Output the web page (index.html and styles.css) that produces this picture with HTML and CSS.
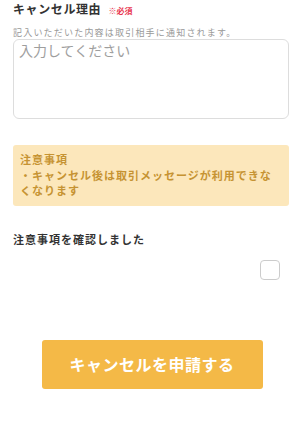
FILE: index.html
```html
<!DOCTYPE html>
<html lang="ja">
<head>
  <meta charset="UTF-8" />
  <meta name="viewport" content="width=device-width, initial-scale=1.0" />
  <title>キャンセル申請</title>
  <link rel="stylesheet" href="styles.css">
</head>
<body>
  <form class="cancel-form">
    <div class="field">
      <label class="field-label" for="reason">キャンセル理由 <span class="required">※必須</span></label>
      <p class="field-note">記入いただいた内容は取引相手に通知されます。</p>
      <textarea id="reason" class="textarea" placeholder="入力してください"></textarea>
    </div>

    <div class="notice">
      <p>注意事項</p>
      <p>・キャンセル後は取引メッセージが利用できなくなります</p>
    </div>

    <div class="confirm">
      <p class="confirm-label">注意事項を確認しました</p>
      <div class="confirm-row">
        <input type="checkbox" class="checkbox" id="agree" />
      </div>
    </div>

    <div class="actions">
      <button type="button" class="button">キャンセルを申請する</button>
    </div>
  </form>
</body>
</html>
```

FILE: styles.css
```css
body {
  margin: 0;
  font-family: "Noto Sans CJK JP", "Noto Sans", sans-serif;
  color: #333;
  background: #fff;
}
p { margin: 0; }
.cancel-form {
  padding: 1px 15px 0 13px;
}
.field-label {
  display: block;
  margin-top: 0;
  font-size: 12px;
  font-weight: bold;
  letter-spacing: 0.6px;
  line-height: 16px;
}
.required {
  margin-left: 4px;
  font-size: 8px;
  color: #e8344e;
  letter-spacing: 0;
}
.field-note {
  margin-top: 7px;
  font-size: 9px;
  color: #999;
  letter-spacing: 1.2px;
  line-height: 13px;
}
.textarea {
  display: block;
  box-sizing: border-box;
  width: 100%;
  height: 80px;
  margin-top: 0;
  padding: 1px 5px;
  border: 1px solid #ddd;
  border-radius: 6px;
  font-family: inherit;
  font-size: 14px;
  line-height: 18px;
  resize: none;
}
.textarea::placeholder {
  color: #9e9e9e;
}
.notice {
  margin-top: 26px;
  padding: 7px 7px 7px;
  background: #fce7bb;
  border-radius: 3px;
  color: #c69332;
  font-size: 11px;
  font-weight: bold;
  letter-spacing: 1px;
  line-height: 15.5px;
}
.confirm {
  margin-top: 25px;
}
.confirm-label {
  font-size: 11px;
  font-weight: bold;
  letter-spacing: 1px;
  line-height: 16px;
}
.confirm-row {
  display: flex;
  justify-content: flex-end;
  padding: 13px 9px 0 0;
}
.checkbox {
  appearance: none;
  width: 20px;
  height: 20px;
  margin: 0;
  border: 1px solid #ccc;
  border-radius: 4px;
  background: #fff;
}
.actions {
  display: flex;
  justify-content: center;
  margin-top: 60px;
  padding-left: 2px;
}
.button {
  width: 221px;
  height: 49px;
  border: none;
  border-radius: 3px;
  background: #f4b947;
  color: #fff;
  font-family: inherit;
  font-size: 16px;
  font-weight: bold;
  letter-spacing: 0.5px;
  cursor: pointer;
}
```
